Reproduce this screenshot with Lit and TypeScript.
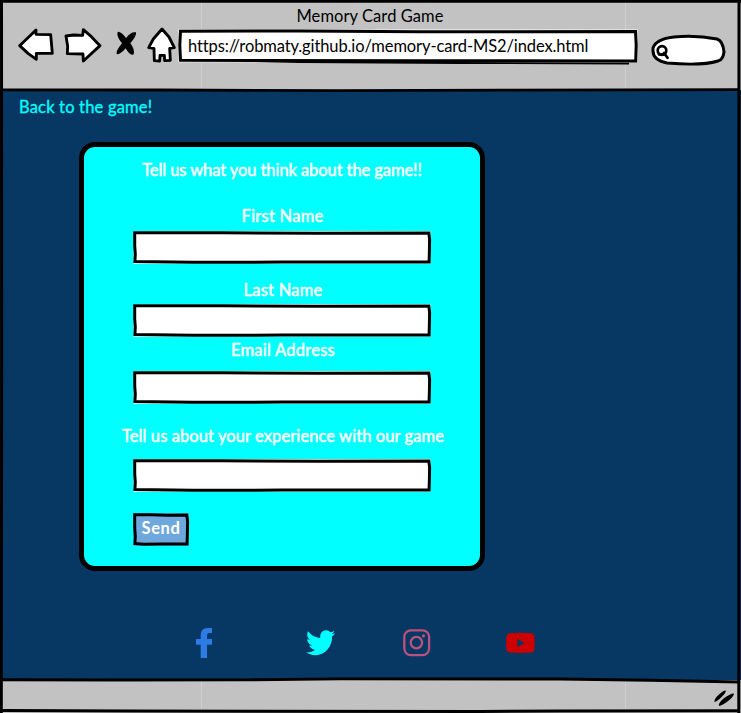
import { LitElement, html, css, svg } from "lit";
import { customElement, property } from "lit/decorators.js";

/** Hand-drawn rectangle with slotted content. */
@customElement("sketch-box")
class SketchBox extends LitElement {
  @property({ type: Number }) w = 298;
  @property({ type: Number }) h = 33;
  @property() fill = "#fff";

  static styles = css`
    :host { display: grid; }
    svg, .content { grid-area: 1 / 1; }
    svg { display: block; overflow: visible; }
    .content { position: relative; display: flex; align-items: center; justify-content: center; padding-bottom: 3px; }
  `;

  render() {
    const { w, h, fill } = this;
    return html`
      <svg width=${w} height=${h} viewBox="0 0 ${w} ${h}">
        <path d="M0.5 0H${w - 0.5}V${h - 0.3}H0.5Z" fill=${fill} />
        <path
          d="M1.7 1.7L${w * 0.3} 1.8L${w * 0.62} 2.2L${w - 2.2} 1.9L${w - 1.4} ${h * 0.25}L${w - 1.6} ${h * 0.6}L${w - 1.9} ${h - 2}L${w * 0.5} ${h - 1.9}L${w * 0.2} ${h - 1.8}L1.9 ${h - 2.5}L2.3 ${h * 0.7}L1.7 ${h * 0.45}Z"
          fill="none" stroke="#000" stroke-width="3" stroke-linejoin="miter" />
      </svg>
      <div class="content"><slot></slot></div>
    `;
  }
}

const outline = (d: string) =>
  svg`<path d=${d} fill="#fff" stroke="#000" stroke-width="8.5" stroke-linejoin="round" stroke-linecap="round"/>`;

@customElement("app-root")
class AppRoot extends LitElement {
  static styles = css`
    :host {
      display: flex; flex-direction: column; position: relative; box-sizing: border-box;
      width: 741px; height: 713px; overflow: hidden; background: #073763;
      font: 16.5px/20px Lato, "Liberation Sans", sans-serif; color: #000; white-space: nowrap;
    }
    svg { display: block; flex: none; }
    header { height: 90px; background: #c2c2c2; }
    .title { height: 20px; padding: 6px 1px 0 0; text-align: center; letter-spacing: .07px; }
    .toolbar { display: flex; padding-left: 17px; }
    .address { display: grid; width: 461px; }
    .address > * { grid-area: 1 / 1; }
    .url { padding: 10px 0 0 11px; letter-spacing: -.11px; }
    main { flex: 1; display: flex; flex-direction: column; }
    .back {
      color: #0ff; padding: 7px 0 0 19px; height: 20px; letter-spacing: .18px;
      text-decoration: none; -webkit-text-stroke: .3px #0ff;
    }
    .card {
      box-sizing: border-box; width: 406px; height: 429px; margin: 25px 0 0 79px;
      border: 5px solid #000; border-radius: 16px; background: #0ff; color: #fff;
      display: flex; flex-direction: column; align-items: center; font-weight: 400;
      -webkit-text-stroke: .5px #fff;
    }
    .card h1 { margin: 13px 0 0; font: inherit; letter-spacing: -.08px; }
    .card label { letter-spacing: .25px; }
    .card .first { margin: 26px 0 5px 1px; }
    .card .last { margin: 16px 0 4px 2px; }
    .card .email { margin: 3px 0 11px 2px; }
    .card .experience { margin: 22px 0 13px 2px; letter-spacing: .09px; }
    .send { align-self: flex-start; margin: 21px 0 0 49px; letter-spacing: .6px; font-weight: 700; -webkit-text-stroke: 0; }
    .social { display: flex; margin: 55px 0 0 195px; height: 34px; }
    .social svg { overflow: visible; }
    footer { height: 33px; background: #c2c2c2; display: flex; justify-content: flex-end; }
    .frame { position: absolute; inset: 0; pointer-events: none; }
  `;

  private field(cls: string, text: string) {
    return html`<label class=${cls}>${text}</label><sketch-box></sketch-box>`;
  }

  render() {
    return html`
      <header>
        <div class="title">Memory Card Game</div>
        <div class="toolbar">
          <svg width="40" height="42" viewBox="51 78 120 126">${outline("M59 137L108 90L108 103L152 104L157 160L109 160L109 178L84 160Z")}</svg>
          <svg width="48" height="42" viewBox="171 78 144 126">${outline("M198 108L221 105L248 106L250 89L274 110L300 137L250 183L249 162L202 161L203 139Z")}</svg>
          <svg width="40" height="42" viewBox="315 78 120 126">
            <path d="M354 95Q363 94 378 114Q393 94 408 97Q411 106 391 130Q405 148 401 163Q391 170 377 145Q360 165 350 162Q346 155 366 130Q351 112 352 100Z"/>
          </svg>
          <svg width="32" height="42" viewBox="435 78 96 126">${outline("M486 87L507 111L523 143L509 145L511 181L494 182L493 166L480 166L479 183L463 182L462 145L446 143L460 117Z")}</svg>
          <div class="address">
            <svg width="461" height="42" viewBox="177 26 461 42">
              <path d="M178.500 29.500H637.500V62.300H178.500Z" fill="#fff"/>
              <path d="M180.500 31.300L300 31L420 31.800L635.500 31.500L636.200 45L635.700 61L420 60.700L180.500 60.300L179.800 45Z" fill="none" stroke="#000" stroke-width="3"/>
              <path d="M250 61L300 62L460 63L629 63.700" fill="none" stroke="#000" stroke-width="1.800"/>
            </svg>
            <div class="url">https://robmaty.github.io/memory-card-MS2/index.html</div>
          </div>
          <svg width="103" height="42" viewBox="638 26 103 42">
            <path d="M653 48Q656 39 674 37Q696 35 717 39Q723 41 724 52Q723 60 718 61Q702 66 667 63Q653 60 653 51Z" fill="#fff" stroke="#000" stroke-width="3" stroke-linejoin="round"/>
            <circle cx="662" cy="50.500" r="4.300" fill="none" stroke="#000" stroke-width="2.700"/>
            <path d="M664 53L667.500 57.800M659 54.500L665 54.500" stroke="#000" stroke-width="2.700" stroke-linecap="round"/>
          </svg>
        </div>
      </header>

      <main>
        <a class="back">Back to the game!</a>
        <section class="card">
          <h1>Tell us what you think about the game!!</h1>
          ${this.field("first", "First Name")}
          ${this.field("last", "Last Name")}
          ${this.field("email", "Email Address")}
          ${this.field("experience", "Tell us about your experience with our game")}
          <sketch-box class="send" w="56" fill="#6fa8dc">Send</sketch-box>
        </section>
        <nav class="social">
          <svg width="111" height="34" viewBox="45 33 333 102">
            <path fill="#2d7be5" d="M62 129V89H48V72H62V61Q62 39 83 39H96V54H88Q81 54 81 62V72H96V89H81V129Z"/>
          </svg>
          <svg width="97" height="34" viewBox="0 0 97 34">
            <path fill="#0ff" transform="translate(0 1.300) scale(.0568 .06)" d="M459.370 151.716c.325 4.548.325 9.097.325 13.645 0 138.720-105.583 298.558-298.558 298.558-59.452 0-114.680-17.219-161.137-47.106 8.447.974 16.568 1.299 25.340 1.299 49.055 0 94.213-16.568 130.274-44.832-46.132-.975-84.792-31.188-98.112-72.772 6.498.974 12.995 1.624 19.818 1.624 9.421 0 18.843-1.300 27.614-3.573-48.081-9.747-84.143-51.980-84.143-102.985v-1.299c13.969 7.797 30.214 12.670 47.431 13.319-28.264-18.843-46.781-51.005-46.781-87.391 0-19.492 5.197-37.360 14.294-52.954 51.655 63.675 129.300 105.258 216.365 109.807-1.624-7.797-2.599-15.918-2.599-24.040 0-57.828 46.782-104.934 104.934-104.934 30.213 0 57.502 12.670 76.670 33.137 23.715-4.548 46.456-13.320 66.599-25.340-7.798 24.366-24.366 44.833-46.132 57.827 21.117-2.273 41.584-8.122 60.426-16.243-14.292 20.791-32.161 39.308-52.628 54.253z"/>
          </svg>
          <svg width="103" height="34" viewBox="403 626 103 34" fill="none" stroke="#b8527f">
            <rect x="404.300" y="630.300" width="24.800" height="24.800" rx="6.500" stroke-width="2.300"/>
            <circle cx="416.400" cy="642.600" r="5.700" stroke-width="2.300"/>
            <circle cx="423.500" cy="635.900" r="1.600" fill="#b8527f" stroke="none"/>
          </svg>
          <svg width="29" height="34" viewBox="506 626 29 34">
            <path fill="#c00" fill-rule="evenodd" d="M510 633.200Q520.500 632.300 531 633.200Q534 633.500 534.400 636.500Q535 643 534.400 649.300Q534 652.300 531 652.600Q520.500 653.400 510 652.600Q507 652.300 506.500 649.300Q505.800 643 506.500 636.500Q507 633.500 510 633.200ZM517.400 638.800V646.900L524.600 642.900Z"/>
          </svg>
        </nav>
      </main>

      <footer>
        <svg width="31" height="33" viewBox="710 680 31 33">
          <path d="M714.500 702Q714 698.500 719 694.500Q724 690 725.500 690.500Q726.500 691.500 723.500 695Q717 702 714.500 702ZM719 706Q718 703.500 723 699Q731 693 733.800 693.500Q734.500 695 730 699.500Q722 706 719 706Z"/>
        </svg>
      </footer>

      <svg class="frame" width="741" height="713" viewBox="0 0 741 713" fill="none">
        <path d="M201.500 3V29M201.500 63V88M625.500 3V29M625.500 65V88M201.500 682V709M625.500 682V709" stroke="#fff" stroke-opacity=".22"/>
        <path d="M0 1.200L250 1.200L741 1.300M1.500 0L1.700 350L1.300 713M739 0L738.800 300L738.800 713" stroke="#000" stroke-width="3"/>
        <path d="M2 89.800L160 90L340 90.600L500 90.200L740 89.700" stroke="#000" stroke-width="2.800"/>
        <path d="M2 679.800L120 680L240 679.900L340 678.900L560 679L650 680.300L740 682" stroke="#000" stroke-width="2.900"/>
        <path d="M2 710.500L130 711L250 711.200L480 711.500L560 711L740 710.800" stroke="#000" stroke-width="3"/>
      </svg>
    `;
  }
}
